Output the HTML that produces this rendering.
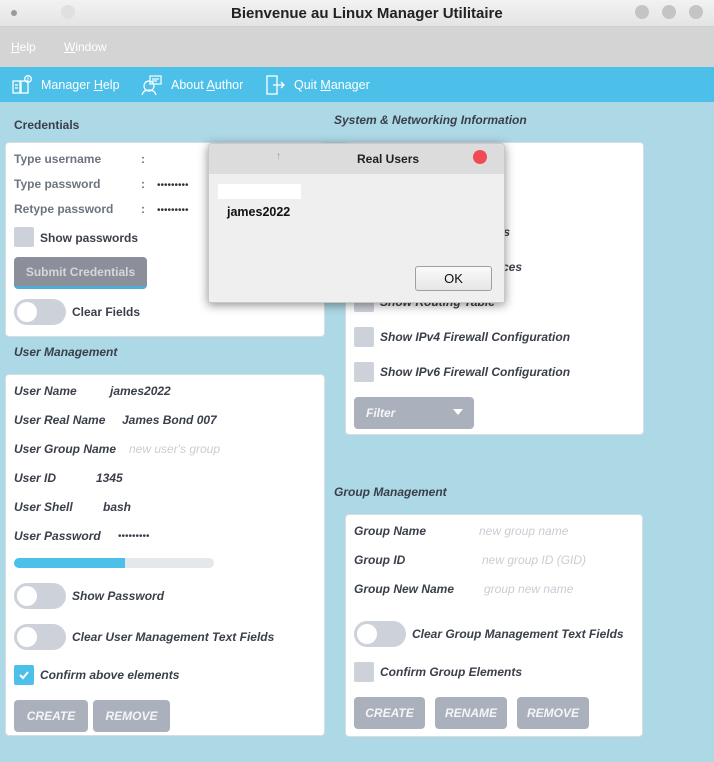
<!DOCTYPE html>
<html><head><meta charset="utf-8"><style>
*{margin:0;padding:0;box-sizing:border-box}
body{width:714px;height:762px;background:#add8e6;font-family:"Liberation Sans",sans-serif;position:relative;overflow:hidden;color:#3a3f4a}
.a{position:absolute;white-space:nowrap}
.tb{left:0;top:0;width:714px;height:27px;background:linear-gradient(#f2f2f2,#e4e4e4);border-bottom:1px solid #d0d0d0}
.mb{left:0;top:27px;width:714px;height:40px;background:#d4d4d4}
.tool{left:0;top:67px;width:714px;height:35px;background:#4cc0e8}
.panel{position:absolute;background:#fff;border-radius:4px;border:1px solid #d8dde3}
.b{font-weight:bold;font-size:12px}
.bi{font-weight:bold;font-style:italic;font-size:12px;color:#3a3f4a}
.lbl{color:#6d7480;font-weight:bold;font-size:12px}
.ph{color:#c9cdd3;font-style:italic;font-size:12px}
.cb{position:absolute;width:20px;height:20px;background:#cdd1d9;border-radius:2px}
.tg{position:absolute;width:52px;height:26px;background:#cdd1d9;border-radius:13px}
.tg:after{content:"";position:absolute;left:3px;top:3px;width:20px;height:20px;border-radius:50%;background:#fff}
.btn{position:absolute;background:#abb1bc;border-radius:4px;color:#f4f5f7;font-weight:bold;font-style:italic;font-size:12px;text-align:center}
.dot{position:absolute;width:14px;height:14px;border-radius:50%;background:#c4c4c4;top:5px}
.u{text-decoration:underline}
</style></head><body>
<div class="a tb"></div>
<div class="a" style="left:11px;top:10px;width:6px;height:6px;border-radius:50%;background:#9a9a9a"></div>
<div class="a" style="left:61px;top:5px;width:14px;height:14px;border-radius:50%;background:#e0e0e0"></div>
<div class="a" style="left:231px;top:5px;font-weight:bold;font-size:15px;color:#222">Bienvenue au Linux Manager Utilitaire</div>
<div class="dot" style="left:635px"></div><div class="dot" style="left:662px"></div><div class="dot" style="left:689px"></div>
<div class="a mb"></div>
<div class="a" style="left:11px;top:40px;font-size:12px;color:#fff"><span class="u">H</span>elp</div>
<div class="a" style="left:64px;top:40px;font-size:12px;color:#fff"><span class="u">W</span>indow</div>
<div class="a tool"></div>
<svg class="a" style="left:12px;top:75px" width="20" height="20" viewBox="0 0 20 20" fill="none" stroke="#fff" stroke-width="1.3"><rect x="1" y="6" width="7" height="12"/><rect x="9" y="6" width="7" height="12"/><line x1="3" y1="10" x2="6" y2="10"/><line x1="3" y1="13" x2="6" y2="13"/><circle cx="16" cy="4" r="3.3"/><line x1="16" y1="2.5" x2="16" y2="4.5"/></svg>
<div class="a" style="left:41px;top:78px;font-size:12.5px;color:#fff">Manager <span class="u">H</span>elp</div>
<svg class="a" style="left:141px;top:74px" width="22" height="22" viewBox="0 0 22 22" fill="none" stroke="#fff" stroke-width="1.2"><rect x="9" y="2" width="11" height="8"/><line x1="11" y1="5" x2="18" y2="5"/><line x1="11" y1="7" x2="16" y2="7"/><circle cx="8" cy="12" r="5"/><path d="M1 21c1-4 4-5 7-5s6 1 7 5"/></svg>
<div class="a" style="left:171px;top:78px;font-size:12.5px;color:#fff">About <span class="u">A</span>uthor</div>
<svg class="a" style="left:265px;top:74px" width="22" height="22" viewBox="0 0 22 22" fill="none" stroke="#fff" stroke-width="1.3"><rect x="2" y="2" width="10" height="18"/><line x1="8" y1="11" x2="19" y2="11"/><path d="M16 8l3 3-3 3"/></svg>
<div class="a" style="left:294px;top:78px;font-size:12.5px;color:#fff">Quit <span class="u">M</span>anager</div>

<div class="a b" style="left:14px;top:118px;color:#3a3f4a">Credentials</div>
<div class="panel" style="left:5px;top:142px;width:320px;height:195px"></div>
<div class="a lbl" style="left:14px;top:152px">Type username</div>
<div class="a lbl" style="left:14px;top:177px">Type password</div>
<div class="a lbl" style="left:14px;top:202px">Retype password</div>
<div class="a lbl" style="left:141px;top:152px">:</div><div class="a lbl" style="left:141px;top:177px">:</div><div class="a lbl" style="left:141px;top:202px">:</div>
<div class="a" style="left:157px;top:180px;font-size:10px;color:#333">•••••••••</div>
<div class="a" style="left:157px;top:205px;font-size:10px;color:#333">•••••••••</div>
<div class="a" style="left:150px;top:151px;width:89px;height:28px;background:#fff"></div>
<div class="cb" style="left:14px;top:227px"></div>
<div class="a b" style="left:40px;top:231px">Show passwords</div>
<div class="btn" style="left:14px;top:257px;width:133px;height:32px;line-height:30px;font-style:normal;background:#8a8f99;color:#d4d7dc;border-bottom:3px solid #4aaed6">Submit Credentials</div>
<div class="tg" style="left:14px;top:299px"></div>
<div class="a b" style="left:72px;top:305px">Clear Fields</div>

<div class="a bi" style="left:14px;top:345px">User Management</div>
<div class="panel" style="left:5px;top:374px;width:320px;height:362px"></div>
<div class="a bi" style="left:14px;top:384px">User Name</div><div class="a bi" style="left:110px;top:384px">james2022</div>
<div class="a bi" style="left:14px;top:413px">User Real Name</div><div class="a bi" style="left:122px;top:413px">James Bond 007</div>
<div class="a bi" style="left:14px;top:442px">User Group Name</div><div class="a ph" style="left:129px;top:442px">new user's group</div>
<div class="a bi" style="left:14px;top:471px">User ID</div><div class="a bi" style="left:96px;top:471px">1345</div>
<div class="a bi" style="left:14px;top:500px">User Shell</div><div class="a bi" style="left:103px;top:500px">bash</div>
<div class="a bi" style="left:14px;top:529px">User Password</div><div class="a" style="left:118px;top:531px;font-size:10px">•••••••••</div>
<div class="a" style="left:14px;top:558px;width:200px;height:10px;background:#e4e7eb;border-radius:5px"></div>
<div class="a" style="left:14px;top:558px;width:111px;height:10px;background:#4cc0e8;border-radius:5px 0 0 5px"></div>
<div class="tg" style="left:14px;top:583px"></div><div class="a bi" style="left:72px;top:589px">Show Password</div>
<div class="tg" style="left:14px;top:624px"></div><div class="a bi" style="left:72px;top:630px">Clear User Management Text Fields</div>
<div class="cb" style="left:14px;top:665px;background:#4cc0e8"></div>
<svg class="a" style="left:18px;top:669px" width="12" height="12" viewBox="0 0 12 12"><path d="M2 6l3 3 5-6" fill="none" stroke="#fff" stroke-width="2"/></svg>
<div class="a bi" style="left:40px;top:668px">Confirm above elements</div>
<div class="btn" style="left:14px;top:700px;width:74px;height:32px;line-height:32px">CREATE</div>
<div class="btn" style="left:93px;top:700px;width:77px;height:32px;line-height:32px">REMOVE</div>

<div class="a bi" style="left:334px;top:113px">System &amp; Networking Information</div>
<div class="panel" style="left:345px;top:142px;width:299px;height:293px"></div>
<div class="a bi" style="left:476px;top:225px">shells</div>
<div class="a bi" style="left:502px;top:260px">ces</div>
<div class="cb" style="left:354px;top:292px"></div>
<div class="a bi" style="left:380px;top:295px">Show Routing Table</div>
<div class="cb" style="left:354px;top:327px"></div><div class="a bi" style="left:380px;top:330px">Show IPv4 Firewall Configuration</div>
<div class="cb" style="left:354px;top:362px"></div><div class="a bi" style="left:380px;top:365px">Show IPv6 Firewall Configuration</div>
<div class="btn" style="left:354px;top:397px;width:120px;height:32px;line-height:32px;text-align:left;padding-left:12px">Filter</div>
<svg class="a" style="left:453px;top:409px" width="10" height="6"><path d="M0 0h10L5 6z" fill="#fff"/></svg>

<div class="a bi" style="left:334px;top:485px">Group Management</div>
<div class="panel" style="left:345px;top:514px;width:298px;height:223px"></div>
<div class="a bi" style="left:354px;top:524px">Group Name</div><div class="a ph" style="left:479px;top:524px">new group name</div>
<div class="a bi" style="left:354px;top:553px">Group ID</div><div class="a ph" style="left:482px;top:553px">new group ID (GID)</div>
<div class="a bi" style="left:354px;top:582px">Group New Name</div><div class="a ph" style="left:484px;top:582px">group new name</div>
<div class="tg" style="left:354px;top:621px"></div><div class="a bi" style="left:412px;top:627px">Clear Group Management Text Fields</div>
<div class="cb" style="left:354px;top:662px"></div><div class="a bi" style="left:380px;top:665px">Confirm Group Elements</div>
<div class="btn" style="left:354px;top:697px;width:71px;height:32px;line-height:32px">CREATE</div>
<div class="btn" style="left:435px;top:697px;width:72px;height:32px;line-height:32px">RENAME</div>
<div class="btn" style="left:517px;top:697px;width:72px;height:32px;line-height:32px">REMOVE</div>

<div class="a" style="left:208px;top:143px;width:297px;height:160px;background:#efefef;border:1px solid #c8c8c8;border-radius:4px 4px 0 0;box-shadow:0 2px 10px rgba(0,0,0,.45)"></div>
<div class="a" style="left:209px;top:144px;width:295px;height:30px;background:#dcdcdc;border-radius:4px 4px 0 0"></div>
<div class="a" style="left:276px;top:151px;font-size:10px;color:#999">↑</div>
<div class="a" style="left:357px;top:152px;font-weight:bold;font-size:12px;color:#222">Real Users</div>
<div class="a" style="left:473px;top:150px;width:14px;height:14px;border-radius:50%;background:#ef4a55"></div>
<div class="a" style="left:218px;top:184px;width:83px;height:15px;background:#fff"></div>
<div class="a" style="left:227px;top:205px;font-weight:bold;font-size:12.5px;color:#111">james2022</div>
<div class="a" style="left:415px;top:266px;width:77px;height:25px;border:1px solid #a0a0a0;border-radius:3px;background:linear-gradient(#fafafa,#e6e6e6);text-align:center;line-height:23px;font-size:13px;color:#111">OK</div>
</body></html>
